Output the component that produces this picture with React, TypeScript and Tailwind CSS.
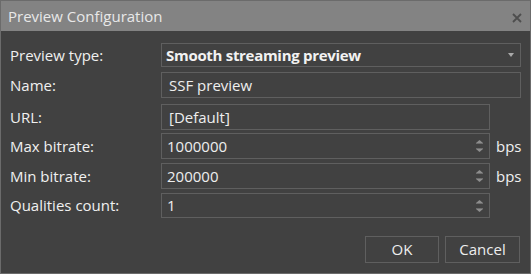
import React from "react";

const font = { fontFamily: '"Open Sans", "Noto Sans", sans-serif' };

// tiny up/down arrows used by the numeric boxes
const SpinArrows: React.FC = () => (
  <div className="flex flex-col items-center gap-[4px] mr-[6px]">
    <svg width="7" height="4" viewBox="0 0 7 4">
      <path d="M3.5 0 L7 3 L0 3 Z" fill="#8d8d8d" />
      <rect x="0" y="3" width="7" height="1" fill="#6d6d6d" />
    </svg>
    <svg width="7" height="4" viewBox="0 0 7 4">
      <rect x="0" y="0" width="7" height="1" fill="#6d6d6d" />
      <path d="M0 1 L7 1 L3.5 4 Z" fill="#8d8d8d" />
    </svg>
  </div>
);

interface RowProps {
  label: string;
  children: React.ReactNode;
  className?: string;
}

const Row: React.FC<RowProps> = ({ label, children, className = "h-[26px]" }) => (
  <div className={`flex items-center ${className}`}>
    <div className="w-[151px] text-[15px] text-[#f0f0f0] leading-none">{label}</div>
    {children}
  </div>
);

const NumberBox: React.FC<{ value: string; unit?: string }> = ({ value, unit }) => (
  <>
    <div className="w-[329px] h-full border border-[#5f5f5f] flex items-center justify-between pl-[5px]">
      <span className="text-[15px] text-[#eeeeee] leading-none">{value}</span>
      <SpinArrows />
    </div>
    {unit && <span className="pl-[6px] text-[15px] text-[#f0f0f0] leading-none">{unit}</span>}
  </>
);

export default function App() {
  return (
    <div
      className="w-[531px] h-[274px] bg-[#414141] border border-[#6b6b6b] flex flex-col select-none"
      style={font}
    >
      {/* Title bar */}
      <div className="h-[30px] bg-[#838383] flex items-center justify-between pl-[7px] pr-[8px]">
        <span className="text-[15px] text-[#e8e8e8]">Preview Configuration</span>
        <svg width="10" height="10" viewBox="0 0 10 10" className="mt-[4px]">
          <path d="M1 1 L9 9 M9 1 L1 9" stroke="#4e4e4e" strokeWidth="1.8" />
        </svg>
      </div>

      {/* Form */}
      <div className="flex flex-col pl-[9px] pt-[12px]">
        <Row label="Preview type:" className="h-[24px]">
          <div className="w-[360px] h-full border border-[#5f5f5f] flex items-center justify-between pl-[4px] pr-[6px]">
            <span className="text-[15px] font-bold tracking-[-0.3px] text-[#f2f2f2] leading-none">
              Smooth streaming preview
            </span>
            <svg width="6" height="4" viewBox="0 0 6 4">
              <path d="M0 0 L6 0 L3 4 Z" fill="#a9a9a9" />
            </svg>
          </div>
        </Row>
        <Row label="Name:" className="h-[26px] mt-[5px]">
          <div className="w-[360px] h-full border border-[#5f5f5f] flex items-center pl-[7px]">
            <span className="text-[15px] text-[#eeeeee] leading-none">SSF preview</span>
          </div>
        </Row>
        <Row label="URL:" className="h-[26px] mt-[6px]">
          <div className="w-[329px] h-full border border-[#5f5f5f] flex items-center pl-[7px]">
            <span className="text-[15px] text-[#eeeeee] leading-none">[Default]</span>
          </div>
        </Row>
        <Row label="Max bitrate:" className="h-[26px] mt-[3px]">
          <NumberBox value="1000000" unit="bps" />
        </Row>
        <Row label="Min bitrate:" className="h-[26px] mt-[4px]">
          <NumberBox value="200000" unit="bps" />
        </Row>
        <Row label="Qualities count:" className="h-[25px] mt-[4px]">
          <NumberBox value="1" />
        </Row>
      </div>

      {/* Buttons */}
      <div className="flex justify-end gap-[6px] pr-[10px] mt-[18px]">
        <button className="w-[74px] h-[27px] border border-[#5f5f5f] text-[15px] text-[#eeeeee] leading-none">
          OK
        </button>
        <button className="w-[75px] h-[27px] border border-[#5f5f5f] text-[15px] text-[#eeeeee] leading-none">
          Cancel
        </button>
      </div>
    </div>
  );
}
